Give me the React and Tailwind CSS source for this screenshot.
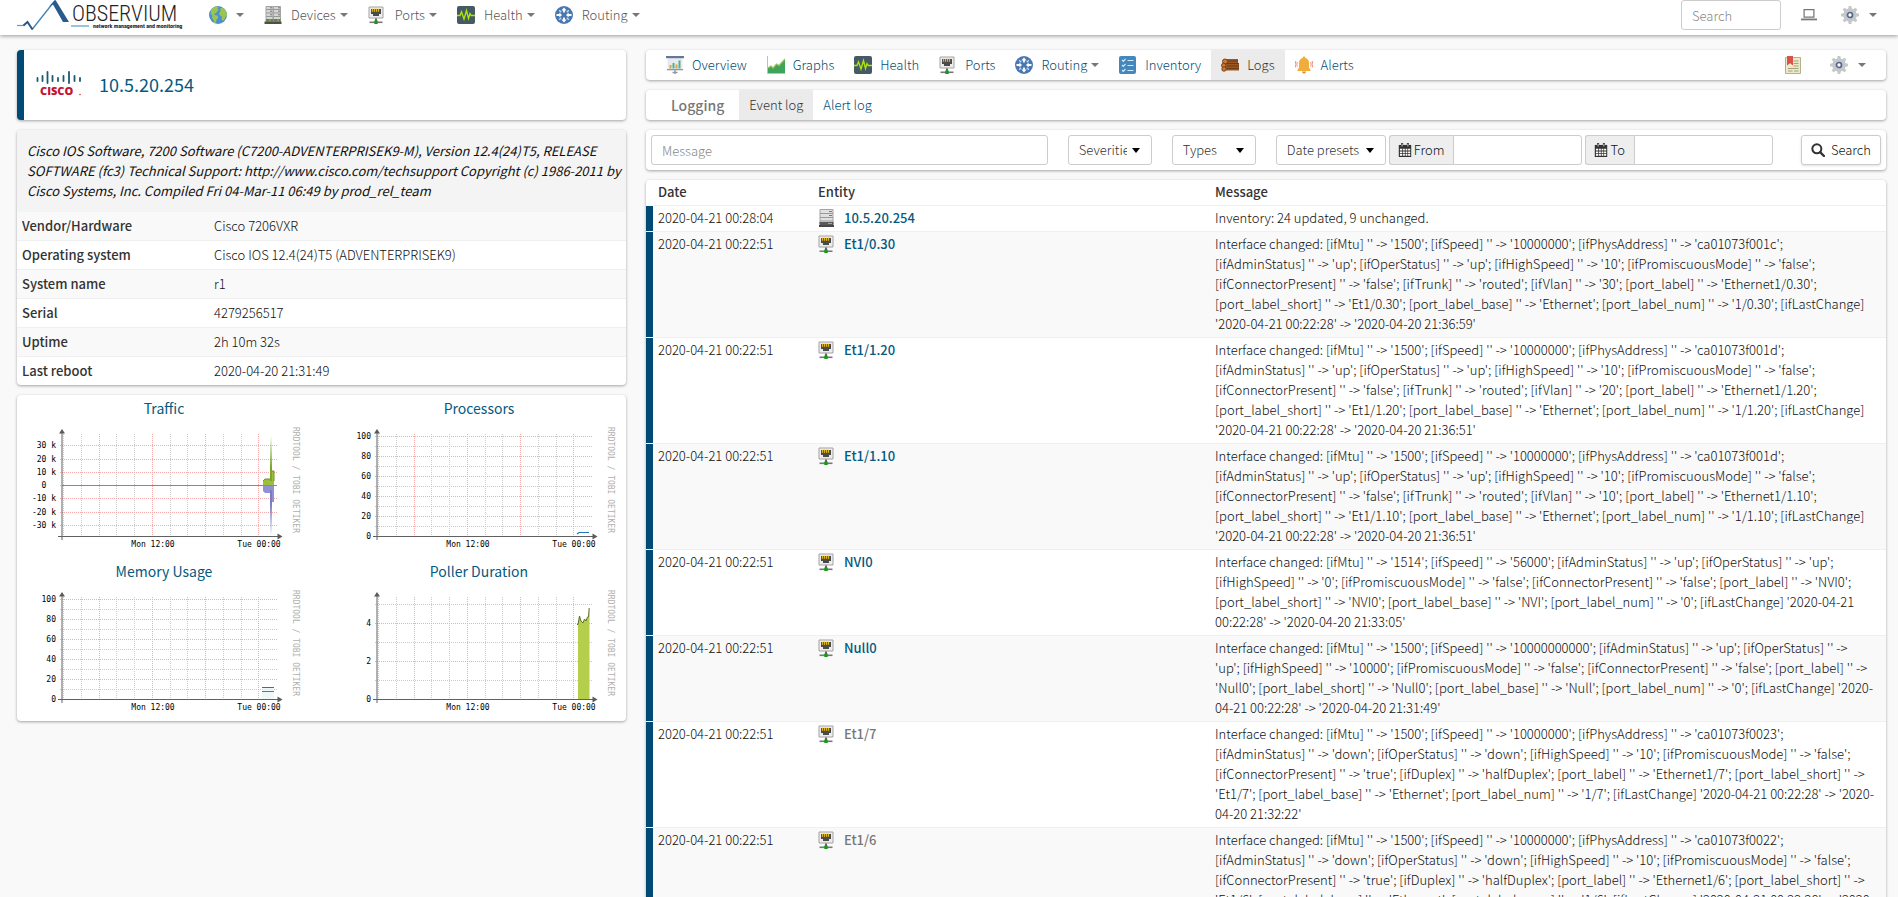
const LINK = "text-[#004d74]";

function Svg({ children, className = "h-[18px] w-[18px]" }) {
  return (
    <svg viewBox="0 0 18 18" className={className + " shrink-0"} aria-hidden="true">
      {children}
    </svg>
  );
}

function GlobeIcon() {
  return (
    <Svg>
      <circle cx="9" cy="9" r="9" fill="#4d8fd6" />
      <path d="M2.2 3.4C3.6 1.6 6 .4 8 .3l1.4 1.2-.8 1.2 1.2 1.2-1.6 1.4-1 1.8-1.8.4.4 1.4 2.6.6 1 2-1.6 1.8-1 3.2-1.4.4-.8-3-1.6-2.2.4-2L1.600 7.600z" fill="#9cc54d" />
      <path d="M11 2.500l2.400-.8 2.800 2.100 1.500 3.200.2 3-1.500.600-.8 2.600-1.800 1.900-1.200-2.200.2-2.400-2-1.200-.6-2.200 1.400-1.800z" fill="#9cc54d" />
    </Svg>
  );
}

function DevicesIcon() {
  return (
    <Svg>
      <path d="M2 0h7v15H2zM9.500 0h7v15h-7z" fill="#d6d6d6" />
      <path d="M2 3.500h7M2 7h7M2 10.500h7M9.500 3.500h7M9.500 7h7M9.500 10.500h7" stroke="#979797" />
      <path d="M6 1.800h2M6 5.200h2M14 1.800h2M14 5.200h2M6 8.800h2M14 8.800h2" stroke="#777" />
      <path d="M2 .5h7v15H2zM9.500.5h7v15h-7z" fill="none" stroke="#a3a3a3" />
      <path d="M.5 15.500h17V18H.5z" fill="#4e4e4e" />
      <path d="M2 13h7v2.500H2zM9.500 13h7v2.500h-7z" fill="#6d7a60" />
      <path d="M5 14.200h2M13 14.200h2" stroke="#7bd01c" />
    </Svg>
  );
}

function ServerIcon() {
  return (
    <Svg>
      <path d="M2 .5h13V15H2z" fill="#e0e0e0" stroke="#a3a3a3" />
      <path d="M2 4.500h13M2 8.500h13M2 12h13" stroke="#999" />
      <path d="M11 2.500h3M11 6.500h3" stroke="#777" />
      <path d="M1.500 13h14v3h-14z" fill="#5a5a5a" />
      <path d="M10 14.500h4" stroke="#84d61c" />
      <path d="M1 16h15v2H1z" fill="#474747" />
    </Svg>
  );
}

function PortIcon() {
  return (
    <Svg>
      <path d="M1 1h14v11H1z" fill="#ececec" stroke="#a3a3a3" />
      <path d="M3 3h10v5h-2v2H5V8H3z" fill="#4b4b4b" />
      <path d="M4.500 2.800v3M6.500 2.800v3M8.500 2.800v3M10.500 2.800v3" stroke="#e0b71e" strokeWidth="1.2" />
      <path d="M8 12.500v3" stroke="#666" strokeWidth="2" />
      <path d="M1.500 16.300h13" stroke="#777" strokeWidth="1.6" />
      <path d="M6.300 14.500h3.400V18H6.300z" fill="#159a15" />
    </Svg>
  );
}

function HealthIcon() {
  return (
    <Svg>
      <rect width="18" height="18" rx="2" fill="#455a64" />
      <path d="M0 9.500h3l1.500-3.700L7 13l2.500-8.500 2 8 1.500-5 1.200 2H18" fill="none" stroke="#aeea00" strokeWidth="1.300" />
    </Svg>
  );
}

function RoutingIcon() {
  return (
    <Svg>
      <circle cx="9" cy="9" r="9" fill="#4878b0" />
      <path d="M9 1.500l2.600 3H9.900v2H8.100v-2H6.400zM9 16.500l2.600-3H9.900v-2H8.100v2H6.400zM7 9L4.400 6.400v1.700H1.500v1.800h2.900v1.700zM11 9l2.600-2.600v1.700h2.900v1.800h-2.900v1.700z" fill="#fff" />
      <path d="M4.200 4.200l2 2M13.800 13.800l-2-2M13.800 4.200l-2 2M4.200 13.800l2-2" stroke="#c4d5ea" strokeWidth="1.400" />
    </Svg>
  );
}

function OverviewIcon() {
  return (
    <Svg>
      <path d="M1.500 2h15v11h-15z" fill="#e7eaf0" />
      <path d="M0 0h18v2.200H0z" fill="#66769a" />
      <path d="M1 13h16v1.300H1z" fill="#8a97b3" />
      <path d="M9 14v4M6.500 16.500h5" stroke="#8a97b3" strokeWidth="1.300" />
      <path d="M3.500 9h2v3.500h-2z" fill="#e9a13b" />
      <path d="M6.500 7h2v5.500h-2zM12.500 4.500h2v8h-2z" fill="#4fb28c" />
      <path d="M9.500 8.500h2v4h-2z" fill="#e9a13b" />
    </Svg>
  );
}

function GraphsIcon() {
  return (
    <Svg>
      <path d="M.5 0v17.500H18" fill="none" stroke="#b9c0c4" />
      <path d="M1 17v-5l3-2 2 2 3.500-4 2.500 1.500L18 3v14z" fill="#3fa45b" />
      <path d="M1 12l3-2 2 2 3.500-4 2.500 1.500L18 3" fill="none" stroke="#9cc54d" strokeWidth="1.200" />
    </Svg>
  );
}

function InventoryIcon() {
  return (
    <Svg>
      <rect x="0" width="17" height="18" rx="2" fill="#4387bd" />
      <path d="M3 4l1.300 1.300L6.500 3M3 9l1.300 1.300L6.500 8M3 14l1.300 1.300L6.500 13M8.500 4.500h6M8.500 9.500h6M8.500 14.500h6" fill="none" stroke="#d5e6f4" strokeWidth="1.200" />
    </Svg>
  );
}

function LogsIcon() {
  return (
    <Svg>
      <path d="M4 3h13v5H4zM3 8h15v6.500H3z" fill="#9b5722" />
      <path d="M5 5h12M6 7.500h12M6 10h12M6 12.500h12" stroke="#6f3a14" />
      <circle cx="4" cy="5.500" r="2.500" fill="#c77a3b" stroke="#7b4116" />
      <circle cx="2.700" cy="9.500" r="2.200" fill="#c77a3b" stroke="#7b4116" />
      <circle cx="3" cy="13" r="2.200" fill="#c77a3b" stroke="#7b4116" />
    </Svg>
  );
}

function AlertsIcon() {
  return (
    <Svg>
      <path d="M9 .5c1 0 1.500.6 1.500 1.500 2.500.7 3.500 2.700 3.500 5v4.500l1.500 2.500v1h-13v-1L4 11.500V7c0-2.300 1-4.300 3.500-5C7.500 1.100 8 .5 9 .5z" fill="#f0ad3c" />
      <path d="M7 15.500h4a2 2 0 0 1-4 0z" fill="#d18d22" />
      <path d="M2.300 6q-1 2.200 0 4.500M.8 5q-1.400 3.200 0 6.500M15.700 6q1 2.200 0 4.500M17.200 5q1.400 3.200 0 6.500" fill="none" stroke="#e8836f" strokeWidth=".9" />
    </Svg>
  );
}

function BookmarkIcon() {
  return (
    <Svg>
      <path d="M1.500 1.500h15v16h-15z" fill="#eceacb" stroke="#b5b188" />
      <path d="M9.500 5h5M9.500 7.500h5M9.500 10h5M4 12.500h10.500M4 15h4.500M10 15h4.500" stroke="#a3a07c" />
      <path d="M3 0h6v9.500L6 7.300 3 9.500z" fill="#d9534a" />
    </Svg>
  );
}

const TEETH = [0, 45, 90, 135, 180, 225, 270, 315];
function GearIcon() {
  return (
    <Svg>
      {TEETH.map((a) => (
        <path key={a} d="M7 3.500L7.700 0h2.600l.7 3.500z" fill="#c5c8c9" transform={`rotate(${a} 9 9)`} />
      ))}
      <circle cx="9" cy="9" r="6.700" fill="#c5c8c9" />
      <circle cx="9" cy="9" r="2.500" fill="#fff" stroke="#54658f" strokeWidth="1.700" />
    </Svg>
  );
}

function LaptopIcon() {
  return (
    <Svg className="h-4 w-4">
      <path d="M3.500 3h11v8.500h-11z" fill="none" stroke="#777" strokeWidth="1.400" />
      <path d="M0 13h18v2H0z" fill="#777" />
    </Svg>
  );
}

function CalendarIcon() {
  return (
    <Svg className="h-[14px] w-[14px]">
      <path d="M1 2.500h16V18H1z" fill="#333" />
      <path d="M2.500 7.500h3v2.300h-3zM6.500 7.500h2.300v2.300H6.500zM9.800 7.500h2.300v2.300H9.800zM13 7.500h2.700v2.300H13zM2.500 10.800h3v2.300h-3zM6.500 10.800h2.300v2.300H6.500zM9.800 10.800h2.300v2.300H9.800zM13 10.800h2.700v2.300H13zM2.500 14.200h3v2.300h-3zM6.500 14.200h2.300v2.300H6.500zM9.800 14.200h2.300v2.300H9.800zM13 14.200h2.700v2.300H13z" fill="#fff" />
      <path d="M5.300 0v5M12.700 0v5" stroke="#333" strokeWidth="2.600" />
      <path d="M5.300 1v3.500M12.700 1v3.500" stroke="#eee" />
    </Svg>
  );
}

function SearchIcon() {
  return (
    <Svg className="h-[14px] w-[14px]">
      <circle cx="7.500" cy="7.500" r="5.800" fill="none" stroke="#333" strokeWidth="2.600" />
      <path d="M11.700 11.700l5 5" stroke="#333" strokeWidth="3" strokeLinecap="round" />
    </Svg>
  );
}

function Caret({ className = "border-t-[#777]" }) {
  return <span className={"h-0 w-0 shrink-0 border-x-4 border-t-4 border-x-transparent " + className} />;
}

function Logo() {
  return (
    <svg viewBox="0 0 172 32" className="h-8 w-[172px]" role="img" aria-label="Observium">
      <path d="M15 29.500L38 0.500" fill="none" stroke="#3f83b5" strokeWidth="1.300" />
      <path d="M0 25.500h7" stroke="#5d9bc4" strokeWidth="1.200" />
      <path d="M6.500 25.500l4-3.500 5 7.500" fill="none" stroke="#25588a" strokeWidth="2" />
      <path d="M32 6.500L38.500 0l13.500 22h-6L36 4.500z" fill="#2a5a8c" />
      <path d="M54 26h18" stroke="#5d9bc4" strokeWidth="1.200" />
      <text x="55" y="21" className="font-['Roboto_Condensed',Roboto,sans-serif] text-[22px] font-light" fill="#222">OBSERVIUM</text>
      <text x="76" y="28" className="font-['Roboto_Condensed',Roboto,sans-serif] text-[6px] font-bold" fill="#222">network management and monitoring</text>
    </svg>
  );
}

function CiscoLogo() {
  return (
    <svg viewBox="0 0 46 26" className="h-[26px] w-[46px]" role="img" aria-label="Cisco">
      <path d="M1.500 7v3M6.500 5v5M11.500 1v11M16.500 5v5M22 7v3M27.500 5v5M33 1v11M38.500 5v5M44 7v3" stroke="#1c5a72" strokeWidth="1.800" strokeLinecap="round" />
      <text x="4" y="24" className="font-['Open_Sans'] text-[11px] font-extrabold" fill="#c4122f">CISCO</text>
      <circle cx="44" cy="23.500" r=".7" fill="#c4122f" />
    </svg>
  );
}

const CARD = "bg-white rounded-sm shadow-[0_1px_3px_rgba(0,0,0,0.35)]";

const XS = [43, 61, 79, 96, 114, 132, 150, 167, 185, 203, 221, 238];

function Chart({ title, major, minor = [], children }) {
  return (
    <div className="pt-[3px] pb-2">
      <h3 className="mb-[6px] text-center text-sm leading-5 font-normal">
        <a href="#graph" className="text-[#045a80]">{title}</a>
      </h3>
      <svg viewBox="0 0 288 126" className="mx-auto block h-[126px] w-[288px]" role="img" aria-label={title}>
        <g shapeRendering="crispEdges" fill="none" strokeDasharray="1 1">
          {minor.map((y) => <path key={y} d={`M40 ${y}.500H257`} stroke="#cacaca" />)}
          {XS.map((x, i) => (
            <path key={x} d={`M${x}.500 10V114`} stroke={i % 3 === 2 ? "#f5abab" : "#cccccc"} />
          ))}
          {major.map(([y]) => <path key={y} d={`M40 ${y}.500H257`} stroke="#f5abab" />)}
        </g>
        {children}
        <path d="M42 116V8M38 112.500H259" stroke="#606060" fill="none" />
        <path d="M39 9.500L42 5l3 4.500zM257.500 109.500l5 3-5 3z" fill="#5a5a5a" />
        <g className="font-['DejaVu_Sans_Mono'] text-[8px] font-normal" fill="#000">
          {major.map(([y, label]) => (
            <text key={y} x="36" y={y + 3} textAnchor="end" className="whitespace-pre">{label}</text>
          ))}
          <text x="133" y="123" textAnchor="middle">Mon 12:00</text>
          <text x="239" y="123" textAnchor="middle">Tue 00:00</text>
        </g>
        <text transform="translate(273 3) rotate(90)" className="font-['DejaVu_Sans_Mono'] text-[8px] font-normal" fill="#b0b0b0">
          RRDTOOL / TOBI OETIKER
        </text>
      </svg>
    </div>
  );
}

const PERCENT = [[12, "100"], [32, "80"], [52, "60"], [72, "40"], [92, "20"], [112, "0"]];
const PERCENT_MINOR = [22, 42, 62, 82, 102];

function Graphs() {
  return (
    <section className={CARD + " grid grid-cols-2 gap-x-[21px]"}>
      <Chart title="Traffic" major={[[21, "30 k"], [35, "20 k"], [48, "10 k"], [61, "0  "], [74, "-10 k"], [88, "-20 k"], [101, "-30 k"]]}>
        <defs>
          <linearGradient id="up" x1="0" y1="0" x2="0" y2="1"><stop offset="0" stopColor="#7ba52c" stopOpacity="0" /><stop offset=".7" stopColor="#7ba52c" /></linearGradient>
          <linearGradient id="down" x1="0" y1="0" x2="0" y2="1"><stop offset=".3" stopColor="#7d7bc0" /><stop offset="1" stopColor="#7d7bc0" stopOpacity="0" /></linearGradient>
        </defs>
        <path d="M243 61v-4l2-2h6v-3h1v-5h2v14z" fill="#9bbf3b" />
        <path d="M243 57l2-2h6M252 47h2v10" stroke="#6f9424" fill="none" />
        <path d="M250 12h2v45h-2z" fill="url(#up)" />
        <path d="M243 62v5l2 2h6l1 9h2V62z" fill="#9190d4" />
        <path d="M250 66h2v46h-2z" fill="url(#down)" />
        <path d="M42 61.500H257" stroke="#8a8a8a" />
      </Chart>
      <Chart title="Processors" major={PERCENT} minor={PERCENT_MINOR}>
        <path d="M242 110l2-1.500h10" stroke="#1f78b4" strokeWidth="1.200" fill="none" />
      </Chart>
      <Chart title="Memory Usage" major={PERCENT} minor={PERCENT_MINOR}>
        <path d="M242 100h12v12h-12z" fill="#e9f3f6" fillOpacity=".7" />
        <path d="M242 100.500h12" stroke="#1f78b4" />
        <path d="M242 104.500h12" stroke="#33a02c" />
      </Chart>
      <Chart title="Poller Duration" major={[[36, "4"], [74, "2"], [112, "0"]]} minor={[17, 55, 93]}>
        <path d="M243 112V37l1.500-8 1.500 5 2 2 1.500-4 1.500 2 1.500-4h1l1-9V112z" fill="#b5cf4d" />
        <path d="M242 37.500h1l1.500-8.500 1.500 5 2 2 1.500-4 1.500 2 1.500-4h1l.7-9" stroke="#5f6f2a" fill="none" />
      </Chart>
    </section>
  );
}

const FACTS = [
  ["Vendor/Hardware", "Cisco 7206VXR"],
  ["Operating system", "Cisco IOS 12.4(24)T5 (ADVENTERPRISEK9)"],
  ["System name", "r1"],
  ["Serial", "4279256517"],
  ["Uptime", "2h 10m 32s"],
  ["Last reboot", "2020-04-20 21:31:49"],
];

function DeviceInfo() {
  return (
    <section className={CARD + " overflow-hidden"}>
      <p className="bg-[#f4f4f4] py-[11px] pr-[2px] pl-[10px] leading-5 font-normal italic">
        Cisco IOS Software, 7200 Software (C7200-ADVENTERPRISEK9-M), Version 12.4(24)T5, RELEASE SOFTWARE (fc3) Technical
        Support: http://www.cisco.com/techsupport Copyright (c) 1986-2011 by Cisco Systems, Inc. Compiled Fri 04-Mar-11
        06:49 by prod_rel_team
      </p>
      <table className="w-full table-fixed border-collapse text-left leading-5">
        <tbody>
          {FACTS.map(([k, v]) => (
            <tr key={k} className="border-b border-[#f0f0f0] odd:bg-[#f9f9f9] last:border-b-0">
              <th scope="row" className="w-[192px] px-[5px] py-1 font-medium text-[#333]">{k}</th>
              <td className="px-[5px] py-1">{v}</td>
            </tr>
          ))}
        </tbody>
      </table>
    </section>
  );
}

const ETH_UP = (mac, vlan, port, time) =>
  `Interface changed: [ifMtu] '' -> '1500'; [ifSpeed] '' -> '10000000'; [ifPhysAddress] '' -> '${mac}';
[ifAdminStatus] '' -> 'up'; [ifOperStatus] '' -> 'up'; [ifHighSpeed] '' -> '10'; [ifPromiscuousMode] '' -> 'false';
[ifConnectorPresent] '' -> 'false'; [ifTrunk] '' -> 'routed'; [ifVlan] '' -> '${vlan}'; [port_label] '' -> 'Ethernet${port}';
[port_label_short] '' -> 'Et${port}'; [port_label_base] '' -> 'Ethernet'; [port_label_num] '' -> '${port}'; [ifLastChange]
'2020-04-21 00:22:28' -> '2020-04-20 ${time}'`;
const ETH_DOWN = (mac, port) =>
  `Interface changed: [ifMtu] '' -> '1500'; [ifSpeed] '' -> '10000000'; [ifPhysAddress] '' -> '${mac}';
[ifAdminStatus] '' -> 'down'; [ifOperStatus] '' -> 'down'; [ifHighSpeed] '' -> '10'; [ifPromiscuousMode] '' -> 'false';
[ifConnectorPresent] '' -> 'true'; [ifDuplex] '' -> 'halfDuplex'; [port_label] '' -> 'Ethernet${port}'; [port_label_short] '' ->
'Et${port}'; [port_label_base] '' -> 'Ethernet'; [port_label_num] '' -> '${port}'; [ifLastChange] '2020-04-21 00:22:28' -> '2020-04-20 21:32:22'`;

const EVENTS = [
  { date: "2020-04-21 00:28:04", entity: "10.5.20.254", device: true, message: "Inventory: 24 updated, 9 unchanged." },
  { date: "2020-04-21 00:22:51", entity: "Et1/0.30", message: ETH_UP("ca01073f001c", "30", "1/0.30", "21:36:59") },
  { date: "2020-04-21 00:22:51", entity: "Et1/1.20", message: ETH_UP("ca01073f001d", "20", "1/1.20", "21:36:51") },
  { date: "2020-04-21 00:22:51", entity: "Et1/1.10", message: ETH_UP("ca01073f001d", "10", "1/1.10", "21:36:51") },
  {
    date: "2020-04-21 00:22:51",
    entity: "NVI0",
    message: `Interface changed: [ifMtu] '' -> '1514'; [ifSpeed] '' -> '56000'; [ifAdminStatus] '' -> 'up'; [ifOperStatus] '' -> 'up';
[ifHighSpeed] '' -> '0'; [ifPromiscuousMode] '' -> 'false'; [ifConnectorPresent] '' -> 'false'; [port_label] '' -> 'NVI0';
[port_label_short] '' -> 'NVI0'; [port_label_base] '' -> 'NVI'; [port_label_num] '' -> '0'; [ifLastChange] '2020-04-21
00:22:28' -> '2020-04-20 21:33:05'`,
  },
  {
    date: "2020-04-21 00:22:51",
    entity: "Null0",
    message: `Interface changed: [ifMtu] '' -> '1500'; [ifSpeed] '' -> '10000000000'; [ifAdminStatus] '' -> 'up'; [ifOperStatus] '' ->
'up'; [ifHighSpeed] '' -> '10000'; [ifPromiscuousMode] '' -> 'false'; [ifConnectorPresent] '' -> 'false'; [port_label] '' ->
'Null0'; [port_label_short] '' -> 'Null0'; [port_label_base] '' -> 'Null'; [port_label_num] '' -> '0'; [ifLastChange] '2020-04-21 00:22:28' -> '2020-04-20 21:31:49'`,
  },
  { date: "2020-04-21 00:22:51", entity: "Et1/7", down: true, message: ETH_DOWN("ca01073f0023", "1/7") },
  { date: "2020-04-21 00:22:51", entity: "Et1/6", down: true, message: ETH_DOWN("ca01073f0022", "1/6") },
];

function EventTable() {
  return (
    <section className={CARD + " overflow-hidden"}>
      <table className="w-full table-fixed border-separate border-spacing-0 text-left leading-5">
        <thead className="text-[#333]">
          <tr>
            <th className="w-[7px]" aria-label="Severity" />
            <th className="w-[160px] px-[5px] pt-[2px] pb-[3px] font-medium">Date</th>
            <th className="w-[397px] px-[5px] pt-[2px] pb-[3px] font-medium">Entity</th>
            <th className="px-[5px] pt-[2px] pb-[3px] font-medium">Message</th>
          </tr>
        </thead>
        <tbody>
          {EVENTS.map((e) => (
            <tr key={e.entity} className="align-top even:bg-[#f9f9f9]">
              <td className="border-t border-white bg-[#004a75]" />
              <td className="border-t border-[#f0f0f0] px-[5px] pt-[2px] pb-[3px]">{e.date}</td>
              <td className="border-t border-[#f0f0f0] px-[5px] pt-[2px] pb-[3px]">
                <a href="#entity" className={"flex items-center gap-2 font-medium " + (e.down ? "text-[#777]" : "text-[#045a80]")}>
                  {e.device ? <ServerIcon /> : <PortIcon />}
                  {e.entity}
                </a>
              </td>
              <td className="border-t border-[#f0f0f0] px-[5px] pt-[2px] pb-[3px] whitespace-pre-line">{e.message}</td>
            </tr>
          ))}
        </tbody>
      </table>
    </section>
  );
}

const FIELD = "h-[30px] rounded-[3px] border border-[#ccc] bg-white text-[#333] outline-none placeholder:text-[#888]";

function Picker({ label, width }) {
  return (
    <div className={"relative " + width}>
      <select aria-label={label} className={FIELD + " w-full appearance-none overflow-hidden pr-6 pl-[10px]"}>
        <option>{label}</option>
      </select>
      <span className="pointer-events-none absolute inset-y-0 right-3 flex items-center">
        <Caret className="border-t-[5px] border-t-black" />
      </span>
    </div>
  );
}

function DateField({ id, label, width }) {
  return (
    <div className="flex">
      <label htmlFor={id} className="flex h-[30px] items-center gap-[2px] rounded-l-[3px] border border-r-0 border-[#ccc] bg-[#eee] pr-[9px] pl-2">
        <CalendarIcon />
        {label}
      </label>
      <input id={id} type="text" className={FIELD + " rounded-l-none px-2 " + width} />
    </div>
  );
}

function Filters() {
  return (
    <form className={CARD + " flex items-center gap-5 p-[5px]"} onSubmit={(e) => e.preventDefault()}>
      <input type="text" aria-label="Message" placeholder="Message" className={FIELD + " min-w-0 flex-1 px-[10px]"} />
      <Picker label="Severities" width="w-[84px]" />
      <Picker label="Types" width="w-[84px]" />
      <div className="flex gap-[3px]">
        <Picker label="Date presets" width="w-[110px]" />
        <DateField id="from" label="From" width="w-[129px]" />
        <DateField id="to" label="To" width="w-[139px]" />
      </div>
      <button type="submit" className="ml-2 flex h-[30px] items-center gap-[6px] rounded-[3px] border border-[#ccc] bg-white px-[9px] shadow-sm">
        <SearchIcon />
        Search
      </button>
    </form>
  );
}

const TABS = [
  ["Overview", OverviewIcon],
  ["Graphs", GraphsIcon],
  ["Health", HealthIcon],
  ["Ports", PortIcon],
  ["Routing", RoutingIcon, true],
  ["Inventory", InventoryIcon],
  ["Logs", LogsIcon],
  ["Alerts", AlertsIcon],
];

function DeviceTabs() {
  return (
    <nav className={CARD + " flex h-[30px] items-stretch px-[10px]"}>
      {TABS.map(([label, Icon, menu]) => (
        <a
          key={label}
          href="#tab"
          className={"flex items-center gap-2 px-[10px] " + (label === "Logs" ? "bg-[#ebebeb] text-[#333]" : LINK)}
        >
          <Icon />
          <span className="flex items-center gap-1">{label}{menu && <Caret />}</span>
        </a>
      ))}
      <a href="#bookmark" aria-label="Bookmark" className="ml-auto flex items-center px-[10px]"><BookmarkIcon /></a>
      <button type="button" aria-label="Device settings" className="ml-2 flex items-center gap-[10px] px-[10px]">
        <GearIcon /><Caret />
      </button>
    </nav>
  );
}

function LogTabs() {
  return (
    <nav className={CARD + " flex h-[30px] items-stretch"}>
      <span className="flex items-center pr-[15px] pl-[25px] text-sm font-medium text-[#777]">Logging</span>
      <a href="#eventlog" className="flex items-center bg-[#ebebeb] px-[10px] text-[#333]">Event log</a>
      <a href="#alertlog" className={"flex items-center px-[10px] " + LINK}>Alert log</a>
    </nav>
  );
}

const MENUS = [["Devices", DevicesIcon], ["Ports", PortIcon], ["Health", HealthIcon], ["Routing", RoutingIcon]];

function TopBar() {
  return (
    <header className="flex h-[35px] items-start bg-white pr-[11px] pl-[17px] text-[#555] shadow-[0_1px_4px_rgba(0,0,0,0.4)]">
      <a href="#home"><Logo /></a>
      <nav className="ml-[10px] flex h-[30px] items-stretch">
        <button type="button" aria-label="Overview" className="flex items-center gap-[9px] px-[10px]"><GlobeIcon /><Caret /></button>
        {MENUS.map(([label, Icon]) => (
          <button key={label} type="button" className="flex items-center gap-[9px] px-[10px]">
            <Icon />
            <span className="flex items-center gap-1">{label}<Caret /></span>
          </button>
        ))}
      </nav>
      <div className="ml-auto flex h-[30px] items-center">
        <input type="search" aria-label="Search" placeholder="Search" className={FIELD + " w-[100px] px-[10px]"} />
        <a href="#display" aria-label="Display" className="ml-5"><LaptopIcon /></a>
        <button type="button" aria-label="Settings" className="ml-[14px] flex items-center gap-[10px] px-[10px]">
          <GearIcon /><Caret />
        </button>
      </div>
    </header>
  );
}

export default function App() {
  return (
    <div className="min-h-screen bg-[#f9f9f9] font-['Noto_Sans_CJK_SC',sans-serif] text-[13px] font-light text-[#111]">
      <TopBar />
      <main className="grid grid-cols-[609fr_1240fr] items-start gap-5 pt-[15px] pr-3 pb-5 pl-[17px]">
        <div className="grid gap-[10px]">
          <section className={CARD + " flex h-[70px] items-center gap-[17px] border-l-[7px] border-[#004a75] pb-[2px] pl-3"}>
            <CiscoLogo />
            <h1 className="text-lg font-normal"><a href="#device" className="text-[#045a80]">10.5.20.254</a></h1>
          </section>
          <DeviceInfo />
          <Graphs />
        </div>
        <div className="grid gap-[10px]">
          <DeviceTabs />
          <LogTabs />
          <Filters />
          <EventTable />
        </div>
      </main>
    </div>
  );
}
